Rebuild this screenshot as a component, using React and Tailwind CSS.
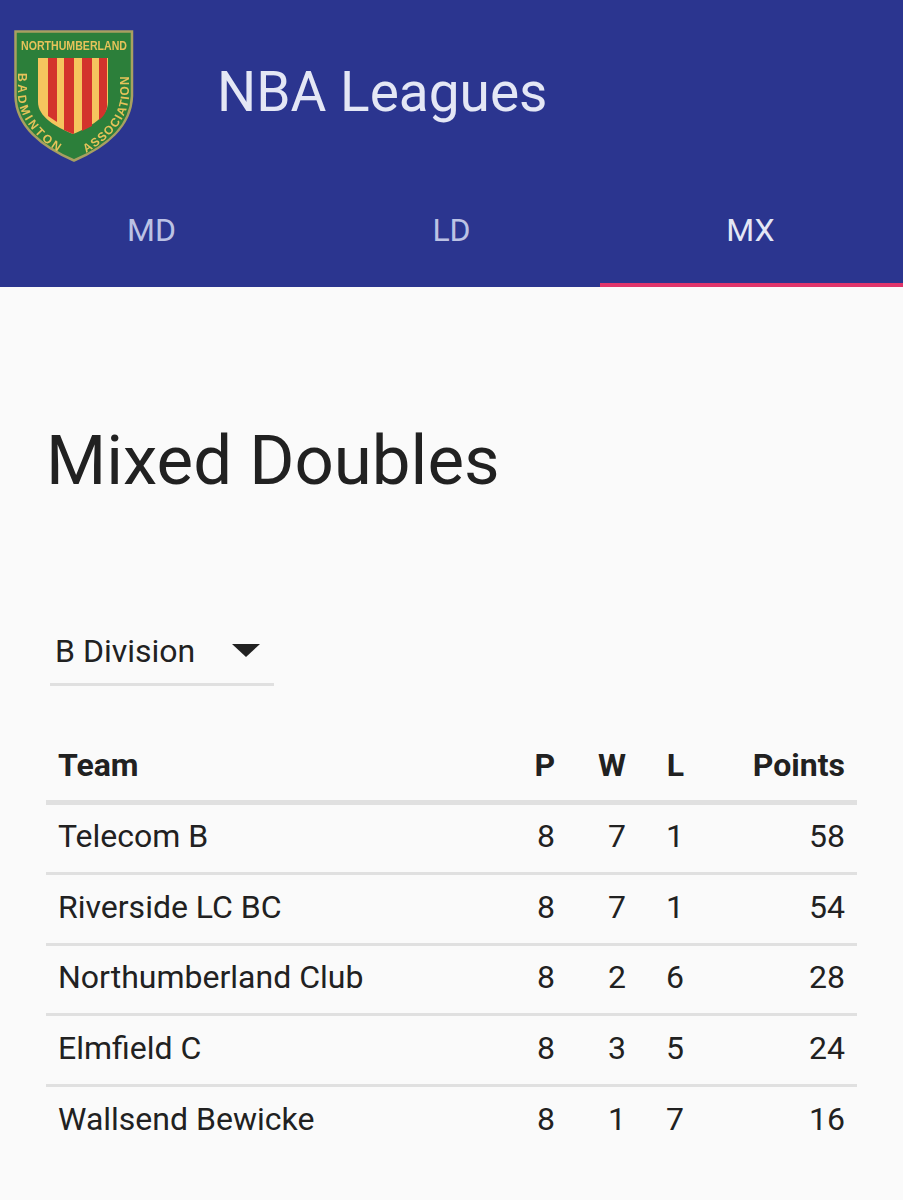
const rows = [
  { team: "Telecom B", p: 8, w: 7, l: 1, points: 58 },
  { team: "Riverside LC BC", p: 8, w: 7, l: 1, points: 54 },
  { team: "Northumberland Club", p: 8, w: 2, l: 6, points: 28 },
  { team: "Elmfield C", p: 8, w: 3, l: 5, points: 24 },
  { team: "Wallsend Bewicke", p: 8, w: 1, l: 7, points: 16 },
];

const Logo = () => (
  <svg width="120" height="132" viewBox="0 0 120 132" className="shrink-0 blur-[0.5px]">
    <path d="M1.5 1.5H118V66C117 96 92 117 60 130.5C28 117 2 96 1.5 66Z" fill="#2c7f3a" stroke="#a8a060" strokeWidth="2.5" />
    <path d="M24 28H94V72C94 87 76 97 59 104C42 97 24 87 24 72Z" fill="#f6c55e" />
    <path d="M34 28H43V92L34 86Z" fill="#d3332c" />
    <path d="M50 28H60V103.500L59 104L50 100Z" fill="#d3332c" />
    <path d="M68 28H78V96L68 101Z" fill="#d3332c" />
    <path d="M85 28H93V77C92 83 89 87 85 90Z" fill="#d3332c" />
    <text transform="translate(60 20) scale(1 1.25)" textAnchor="middle" fontSize="10.600" fontWeight="700" fill="#e6c35a" fontFamily="'Liberation Sans', sans-serif">
      NORTHUMBERLAND
    </text>
    <path id="crest-left" d="M4 43V68C6 90 24 110 46 123" fill="none" />
    <path id="crest-right" d="M72 123C94 110 112 92 115 68V43" fill="none" />
    <text fontSize="12" fontWeight="700" fill="#e6c35a" fontFamily="'Liberation Sans', sans-serif">
      <textPath href="#crest-left" textLength="94" lengthAdjust="spacing">BADMINTON</textPath>
    </text>
    <text fontSize="12" fontWeight="700" fill="#e6c35a" fontFamily="'Liberation Sans', sans-serif">
      <textPath href="#crest-right" textLength="94" lengthAdjust="spacing">ASSOCIATION</textPath>
    </text>
  </svg>
);

const Tab = ({ label, active, className }) => (
  <div
    className={`h-[95px] flex items-center justify-center border-b-[4px] pb-[15px] text-[32px] ${className} ${
      active ? "border-[#e0356b] text-[#e4e7f5]" : "border-transparent text-[#bcc2e4]"
    }`}
  >
    {label}
  </div>
);

const App = () => {
  return (
    <div className="min-h-[1200px] bg-[#fafafa] text-[#212121] overflow-hidden font-['Roboto',sans-serif]">
      {/* Header */}
      <div className="bg-[#2b358f]">
        <div className="h-[192px] flex pt-[30px] pl-[14px]">
          <Logo />
          <h1 className="ml-[83px] mt-[27px] text-[55px] leading-[70px] text-[#e4e7f5]">NBA Leagues</h1>
        </div>
        <div className="flex">
          <Tab label="MD" className="w-[303px]" />
          <Tab label="LD" className="w-[297px]" />
          <Tab label="MX" className="flex-1 pr-[2px]" active />
        </div>
      </div>

      {/* Main Content */}
      <div className="px-[46px]">
        <h2 className="mt-[132px] text-[69px] leading-[84px]">Mixed Doubles</h2>

        <div className="mt-[117px] ml-[4px] w-[224px] h-[66px] border-b-[3px] border-[#e0e0e0] flex items-center justify-between pl-[5px] pr-[14px] pb-[2px] text-[32px]">
          <span>B Division</span>
          <span className="w-0 h-0 border-x-[14px] border-x-transparent border-t-[13px] border-t-[#212121]" />
        </div>

        <table className="mt-[44px] w-[811px] table-fixed text-[32px]">
          <thead>
            <tr className="h-[72px] border-b-[5px] border-[#e0e0e0] font-bold">
              <th className="pl-[12px] text-left font-bold">Team</th>
              <th className="w-[60px] text-right font-bold">P</th>
              <th className="w-[71px] text-right font-bold">W</th>
              <th className="w-[58px] text-right font-bold">L</th>
              <th className="w-[173px] pr-[12px] text-right font-bold">Points</th>
            </tr>
          </thead>
          <tbody>
            {rows.map((row, i) => (
              <tr key={row.team} className={`${i === 0 ? "h-[71.5px]" : "h-[70.5px]"} ${i < rows.length - 1 ? "border-b-[3px] border-[#e0e0e0]" : ""}`}>
                <td className="pl-[12px] pb-[4px]">{row.team}</td>
                <td className="pb-[4px] text-right">{row.p}</td>
                <td className="pb-[4px] text-right">{row.w}</td>
                <td className="pb-[4px] text-right">{row.l}</td>
                <td className="pb-[4px] pr-[12px] text-right">{row.points}</td>
              </tr>
            ))}
          </tbody>
        </table>
      </div>
    </div>
  );
};

export default App;
